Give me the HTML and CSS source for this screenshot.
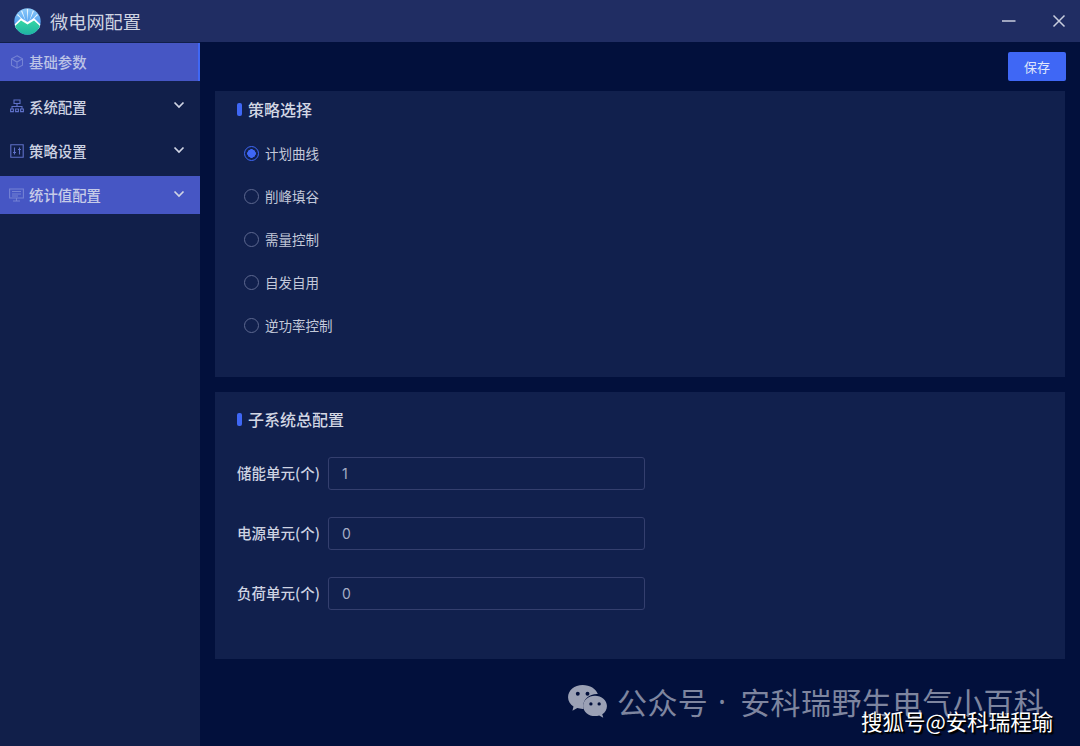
FILE: index.html
```html
<!DOCTYPE html>
<html lang="zh-CN">
<head>
  <meta charset="UTF-8" />
  <title>微电网配置</title>
  <link rel="stylesheet" href="styles.css">
</head>
<body>
  <div class="window">
    <header class="titlebar">
      <svg class="logo" viewBox="0 0 27 27">
        <defs>
          <clipPath id="logo-clip"><circle cx="13.500" cy="13.500" r="13.200"/></clipPath>
          <linearGradient id="logo-sky" x1="0" y1="0" x2="0" y2="1">
            <stop offset="0" stop-color="#8fcbfa"/>
            <stop offset="0.6" stop-color="#4f9ff0"/>
          </linearGradient>
          <linearGradient id="logo-land" x1="0" y1="0" x2="0" y2="1">
            <stop offset="0" stop-color="#35d6a4"/>
            <stop offset="1" stop-color="#1fb2a2"/>
          </linearGradient>
        </defs>
        <g clip-path="url(#logo-clip)">
          <rect width="27" height="27" fill="url(#logo-sky)"/>
          <path d="M13.500 14L12.800 1h1.400zM12 14L7 3l1.200-.6zM15 14l5-11-1.200-.6zM11 14L3 7l.9-1zM16 14l8-7-.9-1z" fill="#e4f3fd"/>
          <path d="M0 17l7-7 6.500 4 6.500-4 7 7v4H0z" fill="#fff"/>
          <path d="M0 19l7-6.500 6.500 4 6.500-4 7 6.500v8H0z" fill="url(#logo-land)"/>
        </g>
      </svg>
      <span class="app-title">微电网配置</span>
      <div class="win-btns">
        <svg class="win-btn" viewBox="0 0 14 14"><path d="M0 7h13.500" /></svg>
        <svg class="win-btn" viewBox="0 0 14 14"><path d="M1.500 1.500l11 11M12.500 1.500l-11 11" /></svg>
      </div>
    </header>

    <div class="main">
      <nav class="sidebar">
        <div class="nav-item selected">
          <svg class="nav-icon" viewBox="0 0 14 14"><path d="M7 .8l5.500 3v6.400L7 13.200l-5.500-3V3.800zM1.500 3.800L7 7l5.500-3.200M7 7v6.200"/></svg>
          <span>基础参数</span>
        </div>
        <div class="nav-item">
          <svg class="nav-icon" viewBox="0 0 14 14"><path d="M4 1h6v3.500H4zM7 4.500v3M2 10V7.500h10V10M.6 10h2.800v2.600H.6zM5.600 10h2.800v2.600H5.600zM10.600 10h2.800v2.600h-2.800z"/></svg>
          <span>系统配置</span>
          <svg class="chevron" viewBox="0 0 12 8"><path d="M1.500 1.500L6 6l4.500-4.500"/></svg>
        </div>
        <div class="nav-item">
          <svg class="nav-icon" viewBox="0 0 14 14"><path d="M.8.8h12.400v12.400H.8zM4.500 3.500v7M9.500 3.500v7M3 8.500h3M8 5.500h3"/></svg>
          <span>策略设置</span>
          <svg class="chevron" viewBox="0 0 12 8"><path d="M1.500 1.500L6 6l4.500-4.500"/></svg>
        </div>
        <div class="nav-item open">
          <svg class="nav-icon wide" viewBox="0 0 15 14"><path d="M.6 1h13.800v9H.6zM3 3.500h9M3 6h9M3 8h6M7.500 10v2.800M4 13h7"/></svg>
          <span>统计值配置</span>
          <svg class="chevron" viewBox="0 0 12 8"><path d="M1.500 1.500L6 6l4.500-4.500"/></svg>
        </div>
      </nav>

      <main class="content">
        <div class="toolbar">
          <button class="save-btn">保存</button>
        </div>

        <section class="panel strategy">
          <h2 class="panel-title">策略选择</h2>
          <div class="radio-list">
            <label class="radio checked"><i></i><span>计划曲线</span></label>
            <label class="radio"><i></i><span>削峰填谷</span></label>
            <label class="radio"><i></i><span>需量控制</span></label>
            <label class="radio"><i></i><span>自发自用</span></label>
            <label class="radio"><i></i><span>逆功率控制</span></label>
          </div>
        </section>

        <section class="panel subsystem">
          <h2 class="panel-title">子系统总配置</h2>
          <div class="form-row">
            <label>储能单元(个)</label>
            <div class="input">1</div>
          </div>
          <div class="form-row">
            <label>电源单元(个)</label>
            <div class="input">0</div>
          </div>
          <div class="form-row">
            <label>负荷单元(个)</label>
            <div class="input">0</div>
          </div>
        </section>
      </main>
    </div>
  </div>

  <!-- watermarks sitting on top of the screenshot -->
  <div class="wm-wechat">
    <svg class="wm-icon" viewBox="0 0 42 36">
      <path d="M16 1C7.500 1 1 6.500 1 13.500c0 4 2.200 7.300 5.600 9.600L5.500 27.500l5-2.700c1.700.5 3.500.8 5.500.8h1a11 11 0 0 1-.4-3c0-6.800 6.300-12.200 14-12.200h1C30 5 23.500 1 16 1z"/>
      <path d="M41 22.500c0-5.800-5.500-10.500-12.300-10.500S16.500 16.700 16.500 22.500 22 33 28.700 33c1.500 0 3-.2 4.300-.7l4.200 2.500-1-3.800c3-2 4.800-5 4.800-8.500z"/>
      <circle cx="11" cy="10" r="2" fill="#02103c"/>
      <circle cx="21" cy="10" r="2" fill="#02103c"/>
      <circle cx="24.500" cy="20.500" r="1.700" fill="#02103c"/>
      <circle cx="33" cy="20.500" r="1.700" fill="#02103c"/>
    </svg>
    <span>公众号</span>
    <span class="wm-dot">·</span>
    <span>安科瑞野生电气小百科</span>
  </div>
  <div class="wm-sohu">搜狐号@安科瑞程瑜</div>
</body>
</html>
```

FILE: styles.css
```css
:root {
  --page: #02103c;
  --bar: #202d63;
  --side: #111f4a;
  --panel: #11204d;
  --accent: #3f67f5;
  --nav-on: #4656c4;
  --text: #d5d9e6;
  --border: #343f6e;
}

* {
  box-sizing: border-box;
}

html, body {
  margin: 0;
  height: 100%;
}

body {
  position: relative;
  overflow: hidden;
  background: var(--page);
  color: var(--text);
  font-family: "Noto Sans CJK SC", "Noto Sans", sans-serif;
}

.window {
  display: flex;
  flex-direction: column;
  height: 746px;
}

.titlebar {
  display: flex;
  align-items: center;
  flex: 0 0 42px;
  padding: 0 14px;
  background: var(--bar);
}

.logo {
  width: 27px;
  height: 27px;
}

.app-title {
  margin-left: 9px;
  font-size: 18.200px;
  line-height: 24px;
  color: #cfd4e2;
}

.win-btns {
  display: flex;
  align-items: center;
  gap: 36px;
  margin-left: auto;
}

.win-btn {
  width: 14px;
  height: 14px;
  fill: none;
  stroke: #c9cede;
  stroke-width: 1.500;
}

.main {
  display: flex;
  flex: 1;
  min-height: 0;
}

.sidebar {
  flex: 0 0 200px;
  background: var(--side);
  padding-top: 1px;
}

.nav-item {
  display: flex;
  align-items: center;
  height: 38px;
  margin-bottom: 6.300px;
  padding: 0 15px 0 10px;
  font-size: 14.400px;
  font-weight: 500;
  color: #cdd2e2;
}

.nav-item span {
  margin-left: 5px;
}

.selected {
  background: var(--nav-on);
  border-right: 2px solid var(--accent);
  color: #bcc3e6;
}

.selected span {
  padding-bottom: 2px;
}

.open {
  background: var(--nav-on);
  color: #c6cbe8;
}

.nav-icon {
  flex: none;
  width: 14px;
  height: 14px;
  fill: none;
  stroke: #5f70c8;
  stroke-width: 1.100;
}

.selected .nav-icon, .open .nav-icon {
  stroke: #7482d4;
}

.nav-icon.wide {
  width: 15px;
  margin-left: -1px;
}

.chevron {
  width: 12px;
  height: 8px;
  margin-left: auto;
  margin-bottom: 2px;
  fill: none;
  stroke: #d0d4e4;
  stroke-width: 1.700;
}

.content {
  flex: 1;
  padding: 0 15px;
}

.toolbar {
  display: flex;
  justify-content: flex-end;
  height: 49px;
  padding-top: 10px;
  margin-right: -1px;
}

.save-btn {
  width: 58px;
  height: 29px;
  padding: 0;
  border: 0;
  border-radius: 2px;
  background: var(--accent);
  color: #dfe5fb;
  font-family: inherit;
  font-size: 13px;
}

.panel {
  background: var(--panel);
  padding: 0 22px;
}

.strategy {
  height: 286px;
  margin-bottom: 15px;
}

.subsystem {
  height: 267px;
}

.panel-title {
  display: flex;
  align-items: center;
  gap: 6px;
  margin: 0;
  font-size: 16px;
  line-height: 22px;
  font-weight: 500;
  color: #d3d7e4;
}

.panel-title::before {
  content: "";
  width: 5px;
  height: 13px;
  border-radius: 2px;
  background: var(--accent);
}

.strategy .panel-title {
  height: 36px;
}

.subsystem .panel-title {
  height: 54px;
  margin-bottom: 11px;
}

.radio-list {
  padding: 5px 0 0 7px;
}

.radio {
  display: flex;
  align-items: center;
  height: 43.100px;
  font-size: 13.500px;
  color: #c3c9da;
}

.radio i {
  width: 15px;
  height: 15px;
  margin-right: 6px;
  border: 1.700px solid #5d6890;
  border-radius: 50%;
}

.radio span {
  padding-bottom: 1px;
}

.radio.checked i {
  border-color: var(--accent);
  background: radial-gradient(circle, var(--accent) 0 4px, transparent 4.500px);
}

.form-row {
  display: flex;
  align-items: center;
  height: 33px;
  margin-bottom: 27px;
}

.form-row label {
  width: 91px;
  padding-bottom: 2px;
  font-size: 14.500px;
  font-weight: 500;
  color: #ced3e2;
}

.input {
  display: flex;
  align-items: center;
  width: 317px;
  height: 33px;
  padding-left: 13px;
  border: 1px solid var(--border);
  border-radius: 3px;
  font-family: "Inter", "Noto Sans", sans-serif;
  font-size: 14px;
  color: #a4acc5;
}

.wm-wechat {
  position: absolute;
  left: 567px;
  top: 682px;
  display: flex;
  align-items: center;
  gap: 9px;
  height: 38px;
  color: #7e859f;
  font-size: 30px;
  letter-spacing: .4px;
  white-space: nowrap;
}

.wm-dot {
  width: 16px;
  margin: 0 1px 0 -3px;
  font-family: "Noto Sans", sans-serif;
  text-align: center;
}

.wm-icon {
  width: 41px;
  height: 35px;
  fill: #9ba1b5;
}

.wm-sohu {
  position: absolute;
  left: 861px;
  top: 707px;
  font-size: 21.500px;
  line-height: 28px;
  color: #fff;
  white-space: nowrap;
  text-shadow: 1px 1px 0 #000, 2px 2px 1px #000;
}
```
